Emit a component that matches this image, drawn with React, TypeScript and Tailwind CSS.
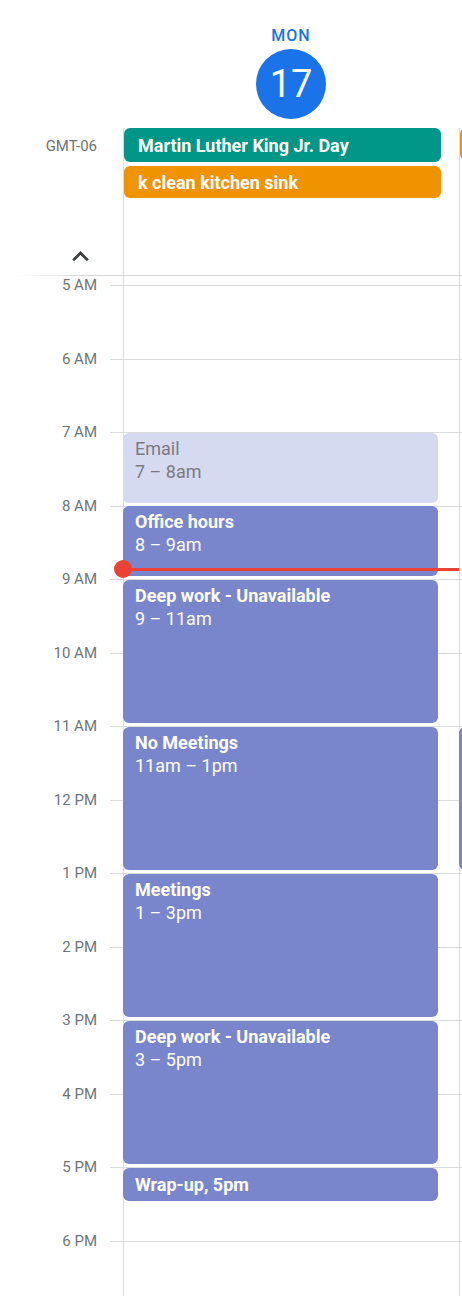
import React from "react";

const HOUR = 73.5;
const FIRST = 5;
const PAD = 9;

type CalEvent = {
  title: string;
  time?: string;
  start: number;
  end: number;
  faded?: boolean;
};

// 7 PM row is below the fold, so it gets a cell but no label
const HOURS = ["5 AM", "6 AM", "7 AM", "8 AM", "9 AM", "10 AM", "11 AM", "12 PM", "1 PM", "2 PM", "3 PM", "4 PM", "5 PM", "6 PM", ""];

const EVENTS: CalEvent[] = [
  { title: "Email", time: "7 – 8am", start: 7, end: 8, faded: true },
  { title: "Office hours", time: "8 – 9am", start: 8, end: 9 },
  { title: "Deep work - Unavailable", time: "9 – 11am", start: 9, end: 11 },
  { title: "No Meetings", time: "11am – 1pm", start: 11, end: 13 },
  { title: "Meetings", time: "1 – 3pm", start: 13, end: 15 },
  { title: "Deep work - Unavailable", time: "3 – 5pm", start: 15, end: 17 },
  { title: "Wrap-up, 5pm", start: 17, end: 17.5 },
];

const NOW = 8 + 52 / 60;

const y = (h: number) => PAD + (h - FIRST) * HOUR;

function HourCells() {
  return (
    <>
      <div className="h-[9px] flex-none" />
      {HOURS.map((h, i) => (
        <div key={i} className="h-[73.5px] flex-none border-t border-[#dadce0]" />
      ))}
    </>
  );
}

function EventBlock({ ev }: { ev: CalEvent }) {
  const top = y(ev.start) + 0.5;
  const height = (ev.end - ev.start) * HOUR - 3.5;
  return (
    <div
      className={
        "absolute left-[-1px] w-[315px] rounded-[6px] px-[12px] overflow-hidden text-[18px] leading-[23px] " +
        (ev.faded ? "bg-[#d6daf0] text-[#7a7a82]" : "bg-[#7986cb] text-white") +
        (ev.time ? " pt-[4px]" : " pt-[5px]")
      }
      style={{ top, height }}
    >
      <div className={ev.faded ? "" : "font-bold"}>{ev.title}</div>
      {ev.time && <div>{ev.time}</div>}
    </div>
  );
}

export default function App() {
  return (
    <div className="w-[462px] h-[1296px] overflow-hidden bg-white font-['Roboto','Liberation_Sans',sans-serif]">
      {/* Header */}
      <div className="flex h-[128px]">
        <div className="w-[123px] flex-none" />
        <div className="w-[336px] flex-none flex flex-col items-center">
          <div className="mt-[28px] text-[16px] leading-[16px] font-medium tracking-[1px] text-[#1a73e8]">MON</div>
          <div className="mt-[5px] w-[70px] h-[70px] rounded-full bg-[#1a73e8] flex items-center justify-center text-white text-[38px] leading-none">
            17
          </div>
        </div>
      </div>

      {/* All-day row */}
      <div className="flex h-[147px]">
        <div className="w-[123px] flex-none flex flex-col">
          <div className="mt-[8px] pr-[26px] text-right text-[15px] leading-[20px] text-[#70757a]">GMT-06</div>
          <svg className="mt-auto mb-[2px] ml-[64px]" width="33" height="33" viewBox="0 0 24 24" fill="#3c4043">
            <path d="M7.41 15.41L12 10.83l4.59 4.58L18 14l-6-6-6 6z" />
          </svg>
        </div>
        <div className="w-[336px] flex-none border-l border-[#dadce0] flex flex-col gap-[4px]">
          <div className="w-[317px] h-[34px] rounded-[6px] bg-[#009688] text-white text-[18px] font-bold pl-[14px] flex items-center">
            Martin Luther King Jr. Day
          </div>
          <div className="w-[317px] h-[32px] rounded-[6px] bg-[#f09300] text-white text-[18px] font-bold pl-[14px] flex items-center">
            k clean kitchen sink
          </div>
        </div>
        <div className="w-[336px] flex-none border-l border-[#dadce0]">
          <div className="w-[317px] h-[32px] rounded-[6px] bg-[#f09300]" />
        </div>
      </div>

      {/* Divider */}
      <div className="h-px bg-linear-to-r from-white from-[3%] via-[#d6d6d6] via-[20%] to-[#d6d6d6]" />

      {/* Time grid */}
      <div className="flex h-[1020px] overflow-hidden">
        <div className="w-[110px] flex-none flex flex-col">
          <div className="h-[9px] flex-none" />
          {HOURS.map((h, i) => (
            <div key={i} className="h-[73.5px] flex-none flex flex-col">
              {h && (
                <span className="-mt-[9px] pr-[13px] text-right text-[15px] leading-[18px] text-[#70757a]">{h}</span>
              )}
            </div>
          ))}
        </div>
        <div className="w-[13px] flex-none flex flex-col">
          <HourCells />
        </div>
        <div className="relative w-[336px] flex-none border-l border-[#dadce0] flex flex-col">
          <HourCells />
          {EVENTS.map((ev, i) => (
            <EventBlock key={i} ev={ev} />
          ))}
          <div className="absolute left-[-1px] w-[336px] h-[3px] bg-[#ea4335]" style={{ top: y(NOW) - 1.5 }} />
          <div className="absolute left-[-10px] w-[18px] h-[18px] rounded-full bg-[#ea4335]" style={{ top: y(NOW) - 9 }} />
        </div>
        <div className="relative w-[336px] flex-none border-l border-[#dadce0] flex flex-col">
          <HourCells />
          <div
            className="absolute left-[-1px] w-[315px] rounded-[6px] bg-[#7986cb]"
            style={{ top: y(11) + 0.5, height: 2 * HOUR - 3.5 }}
          />
        </div>
      </div>
    </div>
  );
}
